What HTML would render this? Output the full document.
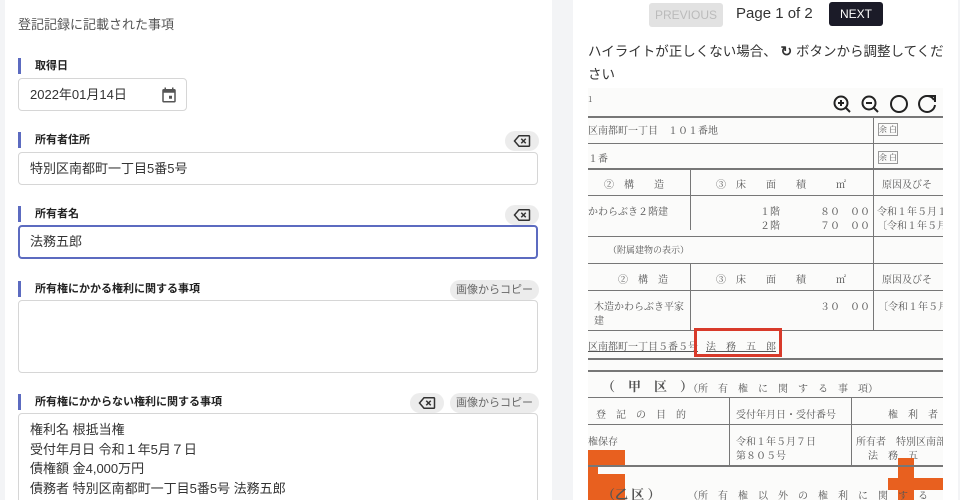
<!DOCTYPE html>
<html><head><meta charset="utf-8"><style>
*{box-sizing:border-box;margin:0;padding:0}
html,body{width:960px;height:500px;overflow:hidden}
body{background:#f3f4f6;font-family:"Liberation Sans","Noto Sans CJK JP",sans-serif;color:#333;position:relative}
.a{position:absolute}
.card{background:#fff}
.lbl{position:absolute;left:18px;font-size:11px;font-weight:bold;color:#222;padding-left:17px;height:14px;line-height:14px}
.lbl:before{content:"";position:absolute;left:0;top:-1px;width:3px;height:16px;background:#5c6bc0}
.inp{position:absolute;left:18px;width:520px;border:1px solid #d6d6d6;border-radius:4px;background:#fff;font-size:13px;color:#333;padding:0 11px}
.chip{position:absolute;height:20px;border-radius:10px;background:#ececec;font-size:11px;color:#666;line-height:20px;text-align:center}
.btn{position:absolute;height:24px;line-height:24px;font-size:12px;text-align:center;border-radius:3px}
.doc{position:absolute;left:588px;top:88px;width:355px;height:412px;background:#fbfbfa;overflow:hidden;font-family:"Noto Serif CJK SC","Liberation Serif",serif;color:#555;font-size:10px}
.doc .h{position:absolute;left:0;width:355px;height:1px;background:#777}
.doc .v{position:absolute;width:1px;background:#777}
.doc span{position:absolute;white-space:nowrap}
</style></head><body>
<div class="a card" style="left:5px;top:0;width:547px;height:500px"></div>
<div class="a card" style="left:573px;top:0;width:385px;height:500px"></div>

<div class="a" style="left:18px;top:14px;font-size:13px;color:#555">登記記録に記載された事項</div>

<div class="lbl" style="top:59px">取得日</div>
<div class="inp" style="top:78px;width:169px;height:33px;line-height:31px">2022年01月14日
<svg class="a" style="left:141px;top:7px" width="18" height="18" viewBox="0 0 24 24"><path fill="#555" d="M19 4h-1V2h-2v2H8V2H6v2H5a2 2 0 0 0-2 2v14a2 2 0 0 0 2 2h14a2 2 0 0 0 2-2V6a2 2 0 0 0-2-2zm0 16H5V9h14v11zM12 13h4v4h-4z"/></svg></div>

<div class="lbl" style="top:133px">所有者住所</div>
<div class="chip" style="left:505px;top:131px;width:34px"><svg style="margin-top:3px" width="18" height="14" viewBox="0 0 24 18"><path fill="none" stroke="#333" stroke-width="2" d="M8 2h13a1 1 0 0 1 1 1v12a1 1 0 0 1-1 1H8L2 9z"/><path stroke="#333" stroke-width="2" d="M11 6l6 6M17 6l-6 6"/></svg></div>
<div class="inp" style="top:152px;height:33px;line-height:31px">特別区南都町一丁目5番5号</div>

<div class="lbl" style="top:207px">所有者名</div>
<div class="chip" style="left:505px;top:205px;width:34px"><svg style="margin-top:3px" width="18" height="14" viewBox="0 0 24 18"><path fill="none" stroke="#333" stroke-width="2" d="M8 2h13a1 1 0 0 1 1 1v12a1 1 0 0 1-1 1H8L2 9z"/><path stroke="#333" stroke-width="2" d="M11 6l6 6M17 6l-6 6"/></svg></div>
<div class="inp" style="top:225px;height:34px;line-height:30px;border:2px solid #5c6bc0;padding-left:10px">法務五郎</div>

<div class="lbl" style="top:282px">所有権にかかる権利に関する事項</div>
<div class="chip" style="left:450px;top:280px;width:89px">画像からコピー</div>
<div class="inp" style="top:300px;height:73px"></div>

<div class="lbl" style="top:395px">所有権にかからない権利に関する事項</div>
<div class="chip" style="left:410px;top:393px;width:34px"><svg style="margin-top:3px" width="18" height="14" viewBox="0 0 24 18"><path fill="none" stroke="#333" stroke-width="2" d="M8 2h13a1 1 0 0 1 1 1v12a1 1 0 0 1-1 1H8L2 9z"/><path stroke="#333" stroke-width="2" d="M11 6l6 6M17 6l-6 6"/></svg></div>
<div class="chip" style="left:450px;top:393px;width:89px">画像からコピー</div>
<div class="inp" style="top:413px;height:100px;padding-top:6px;line-height:19.5px">権利名 根抵当権<br>受付年月日 令和１年5月７日<br>債権額 金4,000万円<br>債務者 特別区南都町一丁目5番5号 法務五郎</div>

<div class="btn" style="left:649px;top:3px;width:74px;background:#e2e2e2;color:#bbb">PREVIOUS</div>
<div class="a" style="left:736px;top:5px;font-size:15px;color:#333">Page 1 of 2</div>
<div class="btn" style="left:829px;top:2px;width:54px;background:#1b1b28;color:#fff">NEXT</div>
<div class="a" style="left:588px;top:40px;width:365px;font-size:13.5px;line-height:23px;color:#333;white-space:nowrap">ハイライトが正しくない場合、 <b style="font-size:14px">↻</b> ボタンから調整してくだ<br>さい</div>

<div class="doc">
<span style="left:0;top:6px;font-size:8px">1</span>
<svg class="a" style="left:244px;top:6px" width="104" height="20" viewBox="0 0 104 20"><g fill="none" stroke="#222" stroke-width="2"><circle cx="9" cy="9" r="6.5"/><path d="M14 14l4 4M6 9h6M9 6v6"/><circle cx="37" cy="9" r="6.5"/><path d="M42 14l4 4M34 9h6"/><circle cx="67" cy="10" r="8"/><path d="M102 6a8 8 0 1 0 1 5"/><path d="M96 2h7v6" stroke-width="2"/></g></svg>
<div class="h" style="top:28px;height:2px"></div>
<span style="left:0;top:34px">区南都町一丁目　１０１番地</span><span style="left:290px;top:35px;font-size:8px;border:1px solid #999">余 白</span>
<div class="h" style="top:55px"></div>
<span style="left:0;top:62px">１番</span><span style="left:290px;top:63px;font-size:8px;border:1px solid #999">余 白</span>
<div class="h" style="top:80px;height:2px"></div>
<div class="v" style="left:285px;top:28px;height:214px"></div>
<span style="left:16px;top:88px">②　構　　造</span><span style="left:128px;top:88px">③　床　　面　　積　　　㎡</span><span style="left:294px;top:88px">原因及びそ</span>
<div class="v" style="left:102px;top:80px;height:62px"></div>
<div class="h" style="top:107px"></div>
<span style="left:0;top:115px">かわらぶき２階建</span><span style="left:172px;top:115px">１階</span><span style="left:232px;top:115px">８０　００</span><span style="left:289px;top:115px">令和１年５月１</span>
<span style="left:172px;top:129px">２階</span><span style="left:232px;top:129px">７０　００</span><span style="left:289px;top:129px">〔令和１年５月</span>
<div class="h" style="top:148px"></div>
<span style="left:20px;top:155px;font-size:9px">（附属建物の表示）</span>
<div class="h" style="top:175px"></div>
<span style="left:30px;top:183px">②　構　造</span><span style="left:128px;top:183px">③　床　　面　　積　　　㎡</span><span style="left:294px;top:183px">原因及びそ</span>
<div class="v" style="left:102px;top:175px;height:67px"></div>
<div class="h" style="top:202px"></div>
<span style="left:6px;top:210px">木造かわらぶき平家</span><span style="left:6px;top:224px">建</span><span style="left:232px;top:210px">３０　００</span><span style="left:290px;top:210px">〔令和１年５月</span>
<div class="h" style="top:242px"></div>
<span style="left:0;top:250px;text-decoration:underline">区南都町一丁目５番５号</span><span style="left:118px;top:250px;text-decoration:underline">法　務　五　郎</span>
<div class="a" style="left:106px;top:240px;width:88px;height:29px;border:3px solid #d83a2a"></div>
<div class="h" style="top:270px;height:2px"></div>
<div class="h" style="top:282px;height:2px"></div>
<span style="left:14px;top:288px;font-size:13px;font-weight:bold">（　甲　区　）</span><span style="left:100px;top:292px">（所　有　権　に　関　す　る　事　項）</span>
<div class="h" style="top:309px"></div>
<span style="left:8px;top:318px">登　記　の　目　的</span><span style="left:148px;top:318px">受付年月日・受付番号</span><span style="left:300px;top:318px">権　利　者　そ</span>
<div class="v" style="left:141px;top:309px;height:68px"></div>
<div class="v" style="left:263px;top:309px;height:68px"></div>
<div class="h" style="top:336px"></div>
<span style="left:0;top:345px">権保存</span><span style="left:148px;top:345px">令和１年５月７日</span><span style="left:148px;top:359px">第８０５号</span><span style="left:268px;top:345px">所有者　特別区南部</span><span style="left:280px;top:359px">法　務　五</span>
<div class="a" style="left:0;top:362px;width:37px;height:60px;background:#e8601f"></div>
<div class="a" style="left:10px;top:378px;width:27px;height:8px;background:#fbfbfa"></div>
<div class="a" style="left:310px;top:370px;width:16px;height:50px;background:#e8601f"></div>
<div class="a" style="left:300px;top:390px;width:55px;height:12px;background:#e8601f"></div>
<div class="h" style="top:377px;height:2px"></div>
<span style="left:14px;top:396px;font-size:13px;font-weight:bold">（乙 区 ）</span><span style="left:100px;top:399px">（所　有　権　以　外　の　権　利　に　関　す　る</span>
</div>
</body></html>
